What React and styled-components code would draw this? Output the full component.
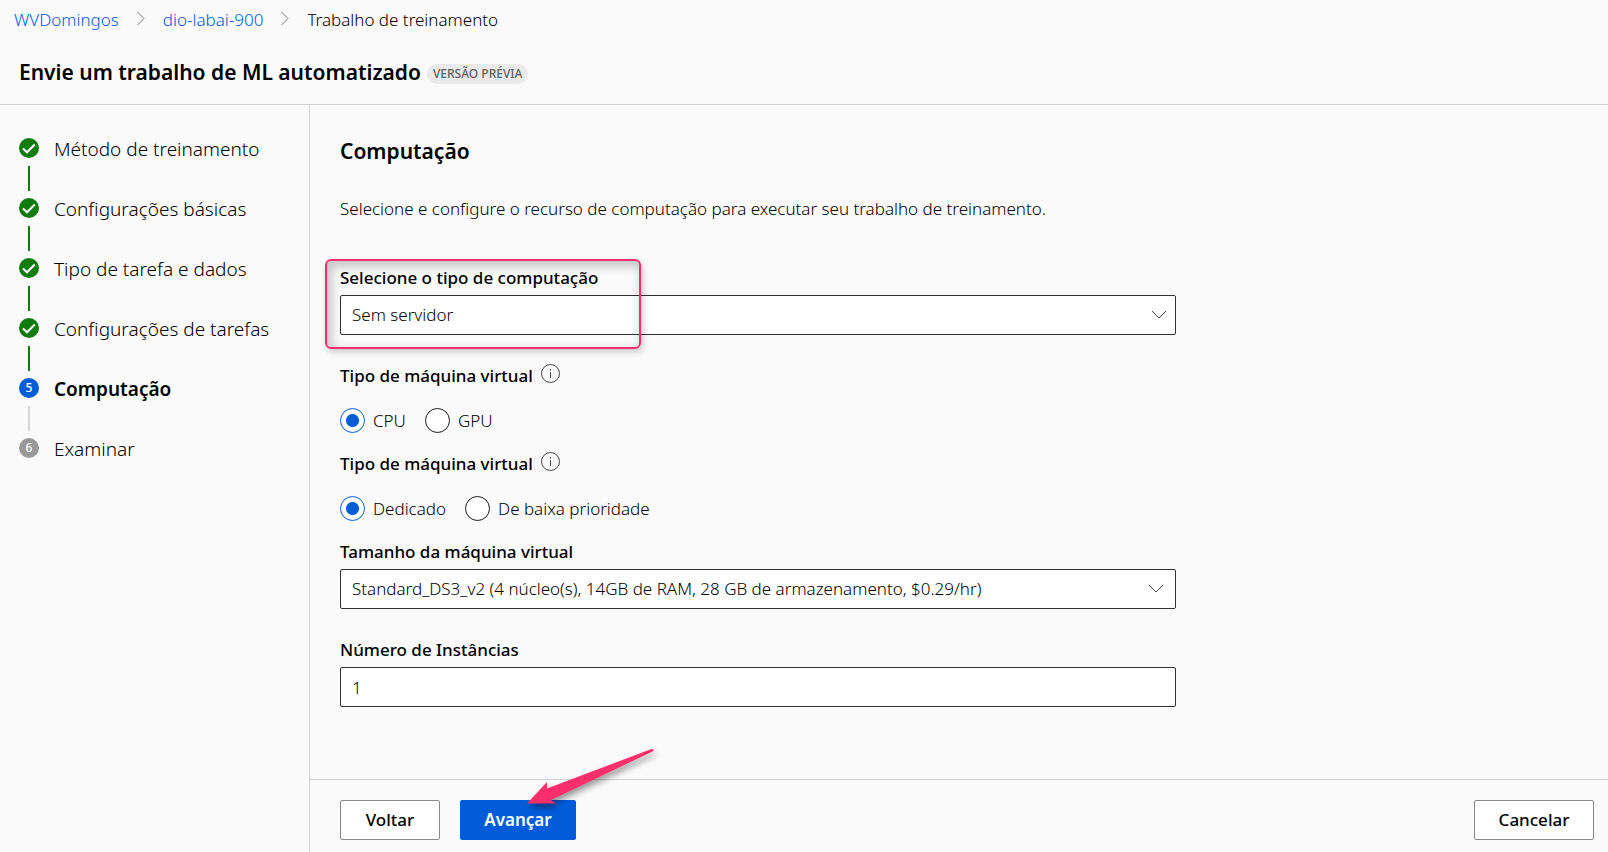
import React, { useState } from 'react';
import styled, { createGlobalStyle, css } from 'styled-components';

const GlobalStyle = createGlobalStyle`
  *, *::before, *::after { box-sizing: border-box; }
  body {
    margin: 0;
    background: #fafafa;
    color: #000;
    font-family: 'Noto Sans', 'Open Sans', sans-serif;
    font-size: 17px;
    font-weight: 350;
    line-height: 24px;
  }
  button, input, select { font: inherit; color: inherit; }
`;

const Page = styled.div`
  display: flex;
  flex-direction: column;
  min-height: 100vh;
`;

const Header = styled.header`
  border-bottom: 1px solid #d1d1d1;
  padding: 8px 14px 17px;
`;

const Breadcrumb = styled.nav`
  display: flex;
  align-items: center;
  gap: 18px;
`;

const CrumbLink = styled.a`
  color: #015cda;
  text-decoration: none;
`;

const TitleRow = styled.div`
  display: flex;
  align-items: center;
  gap: 6px;
  margin-top: 25px;
  padding-left: 5px;
`;

const PageTitle = styled.h1`
  margin: 0;
  font-size: 21px;
  font-weight: 600;
  line-height: 30px;
`;

const Badge = styled.span`
  margin-top: 4px;
  padding: 0 6px;
  border-radius: 10px;
  background: #eaeaea;
  color: #616161;
  font-size: 12px;
  font-weight: 500;
  line-height: 20px;
`;

const Body = styled.div`
  display: flex;
  flex: 1;
`;

const Sidebar = styled.aside`
  flex: 0 0 310px;
  border-right: 1px solid #d1d1d1;
  padding: 33px 19px;
`;

const Steps = styled.ol`
  display: flex;
  flex-direction: column;
  margin: 0;
  padding: 0;
  list-style: none;
`;

const Step = styled.li`
  display: flex;
  gap: 15px;
  font-size: 19px;
  font-weight: ${(p) => (p.$current ? 600 : 350)};
  line-height: 22px;
`;

const StepTrack = styled.div`
  display: flex;
  flex-direction: column;
  align-items: center;
  width: 20px;
`;

const StepMark = styled.span`
  display: flex;
  align-items: center;
  justify-content: center;
  width: 20px;
  height: 20px;
  border-radius: 50%;
  background: ${(p) => p.$color};
  color: #fff;
  font-size: 12px;
  font-weight: 500;
  line-height: 20px;
`;

const StepLine = styled.span`
  width: 2px;
  height: 25px;
  margin: 8px 0 7px;
  background: ${(p) => p.$color};
`;

const Main = styled.main`
  display: flex;
  flex: 1;
  flex-direction: column;
  min-width: 0;
`;

const Content = styled.form`
  flex: 1;
  width: 100%;
  max-width: 896px;
  padding: 31px 30px 24px;
`;

const Heading = styled.h2`
  margin: 0 0 31px;
  font-size: 21px;
  font-weight: 600;
  line-height: 30px;
`;

const Description = styled.p`
  margin: 0 0 45px;
`;

const labelText = css`
  display: flex;
  align-items: center;
  gap: 8px;
  height: 24px;
  padding: 0;
  font-weight: 500;
`;

const Field = styled.div`
  position: relative;
  display: flex;
  flex-direction: column;
  gap: 5px;
  margin-bottom: 29px;
`;

const Label = styled.label`
  ${labelText}
`;

const RadioField = styled.fieldset`
  margin: 0 0 19px;
  border: 0;
  padding: 0;
`;

const Legend = styled.legend`
  ${labelText}
`;

const RadioRow = styled.div`
  display: flex;
  gap: 19px;
  margin-top: 20px;
`;

const RadioLabel = styled.label`
  display: flex;
  align-items: center;
  gap: 8px;
  height: 25px;
`;

const Radio = styled.input`
  appearance: none;
  width: 25px;
  height: 25px;
  margin: 0;
  border: 1px solid #1b1b1b;
  border-radius: 50%;
  background: #fff;

  &:checked {
    border-color: #015cda;
    background: radial-gradient(circle, #015cda 6px, #fff 7px);
  }
`;

const box = css`
  width: 100%;
  height: 40px;
  border: 1px solid #323130;
  border-radius: 2px;
  background: #fff;
  padding: 0 11px;
`;

const SelectWrap = styled.div`
  position: relative;

  svg {
    position: absolute;
    top: 15px;
    right: ${(p) => p.$inset}px;
    pointer-events: none;
  }
`;

const Select = styled.select`
  ${box}
  appearance: none;
`;

const NumberInput = styled.input`
  ${box}
  appearance: textfield;

  &::-webkit-inner-spin-button { appearance: none; }
`;

const Highlight = styled.div`
  position: absolute;
  top: -7px;
  left: -15px;
  width: 316px;
  height: 90px;
  border: 2px solid #fc2f6c;
  border-radius: 6px;
  box-shadow: 2px 3px 6px rgba(0, 0, 0, 0.2), inset 3px 4px 10px 2px rgba(0, 0, 0, 0.2);
  pointer-events: none;
`;

const Footer = styled.footer`
  display: flex;
  gap: 20px;
  border-top: 1px solid #d1d1d1;
  padding: 20px 14px 12px 30px;
`;

const Button = styled.button`
  height: 40px;
  min-width: ${(p) => p.$width}px;
  border: 1px solid ${(p) => (p.$primary ? '#015cda' : '#8a8886')};
  border-radius: 2px;
  background: ${(p) => (p.$primary ? '#015cda' : '#fff')};
  color: ${(p) => (p.$primary ? '#fff' : '#000')};
  padding: 0 16px;
  font-weight: ${(p) => (p.$primary ? 600 : 500)};
`;

const NextSlot = styled.div`
  position: relative;
  margin-right: auto;
`;

const Arrow = styled.svg`
  position: absolute;
  left: 60px;
  bottom: 30px;
  overflow: visible;
  pointer-events: none;
  filter: drop-shadow(2px 4px 3px rgba(0, 0, 0, 0.4));
`;

const CrumbChevron = () => (
  <svg width="8" height="16" viewBox="0 0 8 16" fill="none" stroke="#767676" aria-hidden="true">
    <path d="M0.5 0 7 6.5 0.5 13" />
  </svg>
);

const DownChevron = () => (
  <svg width="16" height="10" viewBox="0 0 16 10" fill="none" stroke="#444" aria-hidden="true">
    <path d="M1 1 8 8 15 1" />
  </svg>
);

const CheckIcon = () => (
  <svg width="20" height="20" viewBox="0 0 20 20" fill="none" stroke="#fff" strokeWidth="2" aria-hidden="true">
    <path d="M4 10.5 8 14.3 15.8 6.5" />
  </svg>
);

const InfoIcon = () => (
  <svg width="19" height="24" viewBox="0 0 19 24" fill="none" stroke="#444" aria-hidden="true">
    <circle cx="9.5" cy="9.5" r="9" />
    <path d="M9.5 8v6" />
    <path d="M9.5 5v1.5" />
  </svg>
);

const steps = [
  { label: 'Método de treinamento', state: 'done' },
  { label: 'Configurações básicas', state: 'done' },
  { label: 'Tipo de tarefa e dados', state: 'done' },
  { label: 'Configurações de tarefas', state: 'done' },
  { label: 'Computação', state: 'current' },
  { label: 'Examinar', state: 'pending' },
];

const markColors = { done: '#107c10', current: '#015cda', pending: '#999' };

function RadioGroup({ legend, name, options }) {
  const [value, setValue] = useState(options[0]);
  return (
    <RadioField>
      <Legend>
        {legend}
        <InfoIcon />
      </Legend>
      <RadioRow>
        {options.map((option) => (
          <RadioLabel key={option}>
            <Radio type="radio" name={name} checked={value === option} onChange={() => setValue(option)} />
            {option}
          </RadioLabel>
        ))}
      </RadioRow>
    </RadioField>
  );
}

export default function App() {
  return (
    <Page>
      <GlobalStyle />
      <Header>
        <Breadcrumb>
          <CrumbLink href="#workspace">WVDomingos</CrumbLink>
          <CrumbChevron />
          <CrumbLink href="#lab">dio-labai-900</CrumbLink>
          <CrumbChevron />
          <span>Trabalho de treinamento</span>
        </Breadcrumb>
        <TitleRow>
          <PageTitle>Envie um trabalho de ML automatizado</PageTitle>
          <Badge>VERSÃO PRÉVIA</Badge>
        </TitleRow>
      </Header>
      <Body>
        <Sidebar>
          <Steps>
            {steps.map((step, i) => (
              <Step key={step.label} $current={step.state === 'current'}>
                <StepTrack>
                  <StepMark $color={markColors[step.state]}>
                    {step.state === 'done' ? <CheckIcon /> : i + 1}
                  </StepMark>
                  {i < steps.length - 1 && (
                    <StepLine $color={step.state === 'done' ? '#107c10' : '#d6d6d6'} />
                  )}
                </StepTrack>
                <span>{step.label}</span>
              </Step>
            ))}
          </Steps>
        </Sidebar>
        <Main>
          <Content>
            <Heading>Computação</Heading>
            <Description>
              Selecione e configure o recurso de computação para executar seu trabalho de treinamento.
            </Description>
            <Field>
              <Label htmlFor="compute-type">Selecione o tipo de computação</Label>
              <SelectWrap $inset={9}>
                <Select id="compute-type">
                  <option>Sem servidor</option>
                </Select>
                <DownChevron />
              </SelectWrap>
              <Highlight />
            </Field>
            <RadioGroup legend="Tipo de máquina virtual" name="processor" options={['CPU', 'GPU']} />
            <RadioGroup legend="Tipo de máquina virtual" name="tier" options={['Dedicado', 'De baixa prioridade']} />
            <Field>
              <Label htmlFor="vm-size">Tamanho da máquina virtual</Label>
              <SelectWrap $inset={12}>
                <Select id="vm-size">
                  <option>Standard_DS3_v2 (4 núcleo(s), 14GB de RAM, 28 GB de armazenamento, $0.29/hr)</option>
                </Select>
                <DownChevron />
              </SelectWrap>
            </Field>
            <Field>
              <Label htmlFor="instances">Número de Instâncias</Label>
              <NumberInput id="instances" type="number" min="1" defaultValue="1" />
            </Field>
          </Content>
          <Footer>
            <Button type="button" $width={100}>Voltar</Button>
            <NextSlot>
              <Button type="button" $primary $width={116}>Avançar</Button>
              <Arrow width="134" height="62" viewBox="0 0 134 62" aria-hidden="true">
                <path
                  d="M7 55.5 27 34 27 40.5 131.5 1Q134 .5 133.5 3L31 52 36 55.5Z"
                  fill="#fc2f6c"
                />
              </Arrow>
            </NextSlot>
            <Button type="button" $width={120}>Cancelar</Button>
          </Footer>
        </Main>
      </Body>
    </Page>
  );
}
